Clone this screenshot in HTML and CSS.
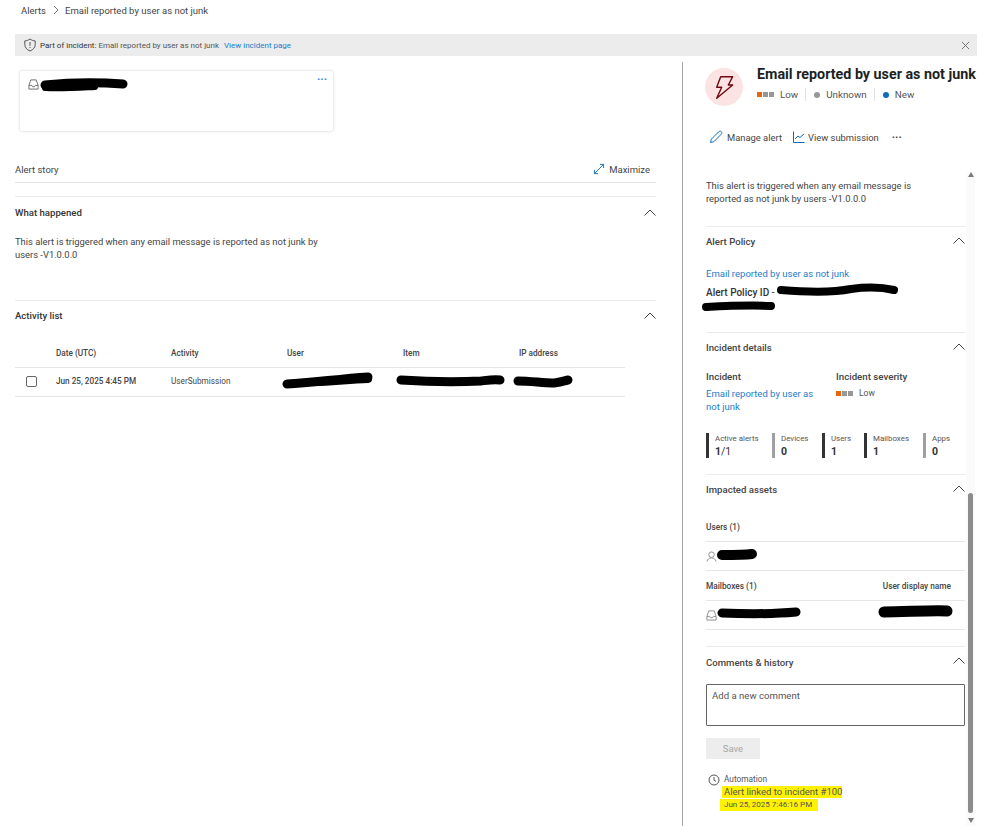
FILE: index.html
```html
<!DOCTYPE html>
<html lang="en">
<head>
<meta charset="utf-8">
<title>Email reported by user as not junk</title>
<link rel="stylesheet" href="styles.css">
</head>
<body>
<div class="page">
  <nav class="crumbs"><span>Alerts</span>
    <svg class="crumb-sep" width="8" height="10" viewBox="0 0 8 10"><path d="M2 1l4 4-4 4" fill="none" stroke="#777" stroke-width="1"/></svg>
    <span>Email reported by user as not junk</span></nav>
  <div class="banner">
    <svg class="shield" width="14" height="14" viewBox="0 0 14 14"><path d="M7 1c1.6 1.2 3.3 1.8 5.2 1.9v3.6c0 3-2 5.200-5.200 6.500C3.800 11.700 1.800 9.500 1.800 6.500V2.900C3.700 2.800 5.400 2.200 7 1z" fill="none" stroke="#555" stroke-width="1"/><path d="M7 4v3.800M7 9v1" stroke="#555" stroke-width="1"/></svg>
    <span class="banner-label">Part of incident:</span>
    <span class="banner-text">Email reported by user as not junk</span>
    <a class="link banner-link">View incident page</a>
    <svg class="banner-close" width="9" height="9" viewBox="0 0 10 10"><path d="M1 1l8 8M9 1l-8 8" stroke="#666" stroke-width="1"/></svg>
  </div>
  <div class="columns">
    <main class="left">
      <div class="card">
        <svg class="mailbox" width="11" height="11" viewBox="0 0 12 12"><path d="M3 1h6l2 6v4H1V7zM1 7h3l1 1.500h2L8 7h3" fill="none" stroke="#666" stroke-width="1"/></svg>
        <span class="card-more">···</span>
      </div>
      <div class="story">
        <span>Alert story</span>
        <span class="maximize">
          <svg width="12" height="12" viewBox="0 0 13 13"><path d="M1.500 11.500l10-10M7.500 1.500h4v4M1.500 7.500v4h4" fill="none" stroke="#0f6cbd" stroke-width="1"/></svg>
          Maximize</span>
      </div>
      <section class="section happened">
        <header class="section-head"><h2>What happened</h2><svg class="chev" width="12" height="7" viewBox="0 0 12 7"><path d="M.5 6.500L6 1l5.500 5.500" fill="none" stroke="#444" stroke-width="1"/></svg></header>
        <p class="body-text">This alert is triggered when any email message is reported as not junk by users -V1.0.0.0</p>
      </section>
      <section class="section activity">
        <header class="section-head"><h2>Activity list</h2><svg class="chev" width="12" height="7" viewBox="0 0 12 7"><path d="M.5 6.500L6 1l5.500 5.500" fill="none" stroke="#444" stroke-width="1"/></svg></header>
        <div class="table">
          <div class="row head-row"><span></span><span>Date (UTC)</span><span>Activity</span><span>User</span><span>Item</span><span>IP address</span></div>
          <div class="row data-row"><span class="check"></span><span class="date">Jun 25, 2025 4:45 PM</span><span>UserSubmission</span><span></span><span></span><span></span></div>
        </div>
      </section>
    </main>

    <aside class="panel">
      <div class="panel-head">
        <div class="bolt-circle">
          <svg width="20" height="24" viewBox="0 0 20 24"><path d="M6.700 1.700H18.700L14.300 10H18.700L2.700 23.300 7.700 12.300H2.700z" fill="none" stroke="#6e0811" stroke-width="1.400" stroke-linejoin="round"/></svg>
        </div>
        <div class="panel-title">
          <h1>Email reported by user as not junk</h1>
          <div class="meta">
            <span class="meta-item"><span class="sev"><i class="on"></i><i></i><i></i></span>Low</span>
            <span class="meta-item"><i class="dot grey"></i>Unknown</span>
            <span class="meta-item"><i class="dot blue"></i>New</span>
          </div>
        </div>
      </div>
      <div class="actions">
        <span class="action"><svg width="14" height="14" viewBox="0 0 14 14"><path d="M1.500 12.500l.8-3.300L9.800 1.700c.7-.7 1.800-.7 2.500 0s.7 1.800 0 2.500L4.800 11.700z" fill="none" stroke="#0f6cbd" stroke-width="1"/></svg>Manage alert</span>
        <span class="action"><svg width="12" height="12" viewBox="0 0 12 12"><path d="M.5.500v11h11M2 8l3-3 2 1.500L11 3" fill="none" stroke="#0f6cbd" stroke-width="1"/></svg>View submission</span>
        <span class="action-more">···</span>
      </div>
      <div class="scroll">
        <div class="scroll-content">
          <p class="body-text intro">This alert is triggered when any email message is reported as not junk by users -V1.0.0.0</p>

          <section class="p-section policy">
            <header class="p-head"><h2>Alert Policy</h2><svg class="chev" width="12" height="7" viewBox="0 0 12 7"><path d="M.5 6.500L6 1l5.500 5.500" fill="none" stroke="#444" stroke-width="1"/></svg></header>
            <a class="link policy-link">Email reported by user as not junk</a>
            <div class="policy-id"><b>Alert Policy ID</b> -</div>
          </section>

          <section class="p-section incident">
            <header class="p-head"><h2>Incident details</h2><svg class="chev" width="12" height="7" viewBox="0 0 12 7"><path d="M.5 6.500L6 1l5.500 5.500" fill="none" stroke="#444" stroke-width="1"/></svg></header>
            <div class="inc-grid">
              <div><div class="inc-label">Incident</div><a class="link inc-link">Email reported by user as not junk</a></div>
              <div><div class="inc-label">Incident severity</div><div class="inc-sev"><span class="sev"><i class="on"></i><i></i><i></i></span>Low</div></div>
            </div>
            <div class="stats">
              <div class="stat dark"><span>Active alerts</span><b>1<em>/1</em></b></div>
              <div class="stat"><span>Devices</span><b>0</b></div>
              <div class="stat dark"><span>Users</span><b>1</b></div>
              <div class="stat dark"><span>Mailboxes</span><b>1</b></div>
              <div class="stat"><span>Apps</span><b>0</b></div>
            </div>
          </section>

          <section class="p-section assets">
            <header class="p-head"><h2>Impacted assets</h2><svg class="chev" width="12" height="7" viewBox="0 0 12 7"><path d="M.5 6.500L6 1l5.500 5.500" fill="none" stroke="#444" stroke-width="1"/></svg></header>
            <div class="asset-head first"><span>Users (1)</span></div>
            <div class="asset-row"><svg width="11" height="11" viewBox="0 0 12 12"><circle cx="6" cy="4" r="3" fill="none" stroke="#888"/><path d="M1 11.500c.5-2.500 2.500-4 5-4s4.500 1.500 5 4" fill="none" stroke="#888"/></svg></div>
            <div class="asset-head"><span>Mailboxes (1)</span><span class="asset-right">User display name</span></div>
            <div class="asset-row"><svg width="11" height="11" viewBox="0 0 12 12"><path d="M3 1h6l2 6v4H1V7zM1 7h3l1 1.500h2L8 7h3" fill="none" stroke="#888" stroke-width="1"/></svg></div>
          </section>

          <section class="p-section comments">
            <header class="p-head"><h2>Comments &amp; history</h2><svg class="chev" width="12" height="7" viewBox="0 0 12 7"><path d="M.5 6.500L6 1l5.500 5.500" fill="none" stroke="#444" stroke-width="1"/></svg></header>
            <div class="comment-box">Add a new comment</div>
            <div class="save">Save</div>
            <div class="history">
              <svg width="12" height="12" viewBox="0 0 12 12"><circle cx="6" cy="6" r="5" fill="none" stroke="#555"/><path d="M6 3v3.300l2 1" fill="none" stroke="#555"/></svg>
              <div class="history-text">
                <div class="auto">Automation</div>
                <div><mark class="hl-main">Alert linked to incident #100</mark></div>
                <div><mark class="hl-date">Jun 25, 2025 7:46:16 PM</mark></div>
              </div>
            </div>
          </section>
        </div>
        <div class="scrollbar">
          <i class="arrow up"></i>
          <div class="track"><div class="thumb"></div></div>
          <i class="arrow down"></i>
        </div>
      </div>
    </aside>
  </div>
  <svg class="redactions" width="999" height="826" viewBox="0 0 999 826" aria-hidden="true">
    <g fill="none" stroke="#000" stroke-linecap="round" stroke-linejoin="round">
      <path stroke-width="9" d="M45 85c20-2 50-3 78-1" />
      <path stroke-width="6" d="M45 88c15 1 30 0 50-1" />
      <path stroke-width="9" d="M287 384c25-1 50-5 81-7" />
      <path stroke-width="8" d="M318 382c20-1 30-2 50-3" />
      <path stroke-width="9" d="M401 380c30 2 60 2 80 1 8-1 14-2 19-1" />
      <path stroke-width="9" d="M518 381c12 0 25 2 34 2 6 0 11-2 16-3" />
      <path stroke-width="8" d="M781 290c25 2 50 3 70-1 15-2 30-2 43 1" />
      <path stroke-width="8" d="M706 307c20-1 45-2 65-1" />
      <path stroke-width="10" d="M722 555c10 0 22 0 30-1" />
      <path stroke-width="9" d="M722 613c25 1 52 1 74-1" />
      <path stroke-width="11" d="M884 612c20 0 50-2 63-1" />
    </g>
  </svg>
</div>
</body>
</html>
```

FILE: styles.css
```css
* { box-sizing: border-box; }
html, body { margin: 0; padding: 0; }
body {
  background: #fff;
  font-family: Roboto, "Open Sans", "Liberation Sans", sans-serif;
  color: #323130;
  font-size: 9.500px;
}
.page { position: relative; width: 999px; height: 826px; overflow: hidden; }
h1, h2, p { margin: 0; }

.link { color: #1b7cc9; }

.crumbs { display: flex; align-items: center; gap: 4px; height: 20px; padding-left: 21px; font-size: 9.500px; color: #444; }
.crumb-sep { margin: 0 1px 0 2px; }

.banner { display: flex; align-items: center; height: 22px; margin: 14px 22px 0 15px; padding-left: 8px; background: #ececec; font-size: 8px; color: #555; }
.shield { margin-right: 3px; }
.banner-label { margin-right: 2px; color: #333; }
.banner-link { margin-left: 5px; }
.banner-close { margin-left: auto; margin-right: 7px; }

.columns { display: flex; height: 770px; }
.left { width: 682px; padding: 15px 0 0 15px; flex: none; }

.card { position: relative; width: 313px; height: 60px; margin-left: 5px; background: #fff; border-radius: 2px; box-shadow: 0 0 3px rgba(0,0,0,.22); padding: 8px; }
.card-more { position: absolute; top: 3px; right: 6px; color: #2b88d8; font-size: 11px; font-weight: 700; line-height: 12px; }

.story { display: flex; justify-content: space-between; align-items: center; width: 641px; height: 25px; margin-top: 27px; padding-bottom: 2px; border-bottom: 1px solid #e4e4e4; font-size: 9.500px; color: #444; }
.maximize { display: flex; align-items: center; gap: 4px; margin-right: 6px; font-size: 9.500px; }

.section { width: 641px; border-top: 1px solid #eaeaea; }
.happened { height: 104px; margin-top: 13px; }
.section-head { display: flex; justify-content: space-between; align-items: center; height: 30px; }
.activity .section-head { height: 29px; }
.section-head h2 { font-size: 9.600px; font-weight: 500; color: #333; }
.chev { display: block; }
.body-text { width: 310px; font-size: 9.400px; line-height: 12.500px; color: #444; }
.happened .body-text { margin-top: 9px; }

.table { width: 610px; margin-top: 8px; font-size: 8.200px; }
.row { display: grid; grid-template-columns: 41px 115px 116px 116px 116px 1fr; align-items: center; border-bottom: 1px solid #e6e6e6; }
.head-row { height: 30px; font-weight: 500; color: #444; }
.data-row { height: 29px; padding-bottom: 2px; color: #444; }
.check { width: 11px; height: 11px; margin-left: 11px; border: 1px solid #666; border-radius: 2px; }
.date { font-weight: 500; }

.panel { flex: 1; margin-top: 6px; border-left: 1px solid #a6a6a6; display: flex; flex-direction: column; min-width: 0; }
.panel-head { display: flex; padding: 6px 0 0 22px; }
.bolt-circle { display: flex; align-items: center; justify-content: center; width: 38px; height: 38px; border-radius: 50%; background: #fbe3e4; flex: none; }
.panel-title { margin-left: 14px; white-space: nowrap; }
.panel-title h1 { font-size: 14.300px; font-weight: 700; line-height: 13px; color: #201f1e; }
.meta { display: flex; margin-top: 7px; font-size: 9.800px; color: #555; }
.meta-item { display: flex; align-items: center; height: 13px; padding-right: 7px; margin-right: 8px; border-right: 1px solid #e0e0e0; }
.meta-item:last-child { border: 0; }
.sev { display: inline-flex; gap: 1px; margin-right: 6px; }
.sev i { display: block; width: 5px; height: 5px; background: #979797; }
.sev i.on { background: #e8650f; }
.dot { width: 6px; height: 6px; border-radius: 50%; margin-right: 6px; }
.dot.grey { background: #979797; }
.dot.blue { background: #0f6cbd; }

.actions { display: flex; align-items: center; margin-top: 19px; padding-left: 26px; height: 24px; font-size: 9.400px; color: #444; }
.action { display: flex; align-items: center; gap: 3px; margin-right: 11px; }
.action:first-child { gap: 4px; }
.action-more { font-weight: 700; font-size: 11px; margin-left: 2px; }

.scroll { display: flex; flex: 1; min-height: 0; margin-top: 9px; }
.scroll-content { width: 259px; margin-left: 23px; flex: none; }
.intro { padding-top: 22px; height: 68px; width: 240px; }

.p-section { border-top: 1px solid #eaeaea; }
.p-head { display: flex; justify-content: space-between; align-items: center; height: 29px; }
.p-head h2 { font-size: 9.600px; font-weight: 500; color: #444; }
.p-section .chev { margin-top: -3px; }

.policy { height: 106px; }
.policy-link { display: block; margin-top: 11px; font-size: 9.500px; line-height: 13px; }
.policy-id { margin-top: 6px; font-size: 10px; line-height: 13px; color: #333; }
.policy-id b { font-weight: 500; }

.incident { height: 142px; }
.inc-grid { display: grid; grid-template-columns: 130px 1fr; margin-top: 8px; font-size: 9.500px; line-height: 13px; }
.inc-label { font-size: 9.700px; font-weight: 500; color: #444; margin-bottom: 4px; }
.inc-link { display: block; width: 112px; }
.inc-sev { display: flex; align-items: center; font-size: 8.500px; color: #555; height: 13px; }
.stats { display: flex; margin-top: 20px; }
.stat { display: flex; flex-direction: column; height: 25px; padding-left: 6px; border-left: 3px solid #a0a0a0; font-size: 7.900px; line-height: 12px; color: #555; white-space: nowrap; }
.stat.dark { border-left-color: #333; }
.stat b { font-size: 10.500px; color: #333; line-height: 13px; }
.stat em { font-style: normal; font-weight: 400; }
.stat:nth-child(1) { width: 66px; }
.stat:nth-child(2) { width: 50px; }
.stat:nth-child(3) { width: 42px; }
.stat:nth-child(4) { width: 59px; }

.assets { height: 172px; }
.asset-head { display: flex; justify-content: space-between; align-items: center; height: 30px; font-size: 8.300px; font-weight: 500; color: #444; border-bottom: 1px solid #e6e6e6; }
.asset-head.first { margin-top: 8px; }
.asset-right { margin-right: 14px; }
.asset-row { display: flex; align-items: center; height: 29px; border-bottom: 1px solid #e6e6e6; }

.comments .p-head { height: 30px; }
.comment-box { width: 259px; height: 42px; margin-top: 7px; padding: 5px 5px; border: 1px solid #666; border-radius: 1px; font-size: 9.600px; color: #555; }
.save { display: flex; align-items: center; justify-content: center; width: 54px; height: 21px; margin-top: 12px; background: #ededed; color: #a6a6a6; font-size: 9.500px; }
.history { display: flex; margin-top: 14px; padding-left: 2px; }
.history-text { margin-left: 4px; font-size: 8.300px; line-height: 12.500px; color: #555; }
.history > svg { margin-top: 1px; }
.history-text mark { background: #fff200; color: #555; }
.hl-main { font-size: 9.500px; padding: 0 0 1px 2px; margin-left: -2px; }
.hl-date { font-size: 8px; padding: 1px 6px 2px 4px; margin-left: -4px; }

.scrollbar { display: flex; flex-direction: column; align-items: center; width: 9px; margin-left: 1px; padding: 14px 0 3px; background: linear-gradient(#fff 12px, #fafafa 20px); flex: none; height: 668px; }
.track { flex: 1; width: 5px; position: relative; }
.thumb { position: absolute; left: 0; right: 0; bottom: 5px; height: 320px; border-radius: 3px; background: #8c8c8c; }
.arrow { width: 0; height: 0; border-left: 3px solid transparent; border-right: 3px solid transparent; }
.arrow.up { border-bottom: 5px solid #7a7a7a; }
.arrow.down { border-top: 5px solid #7a7a7a; }

.redactions { position: absolute; left: 0; top: 0; pointer-events: none; }
```
